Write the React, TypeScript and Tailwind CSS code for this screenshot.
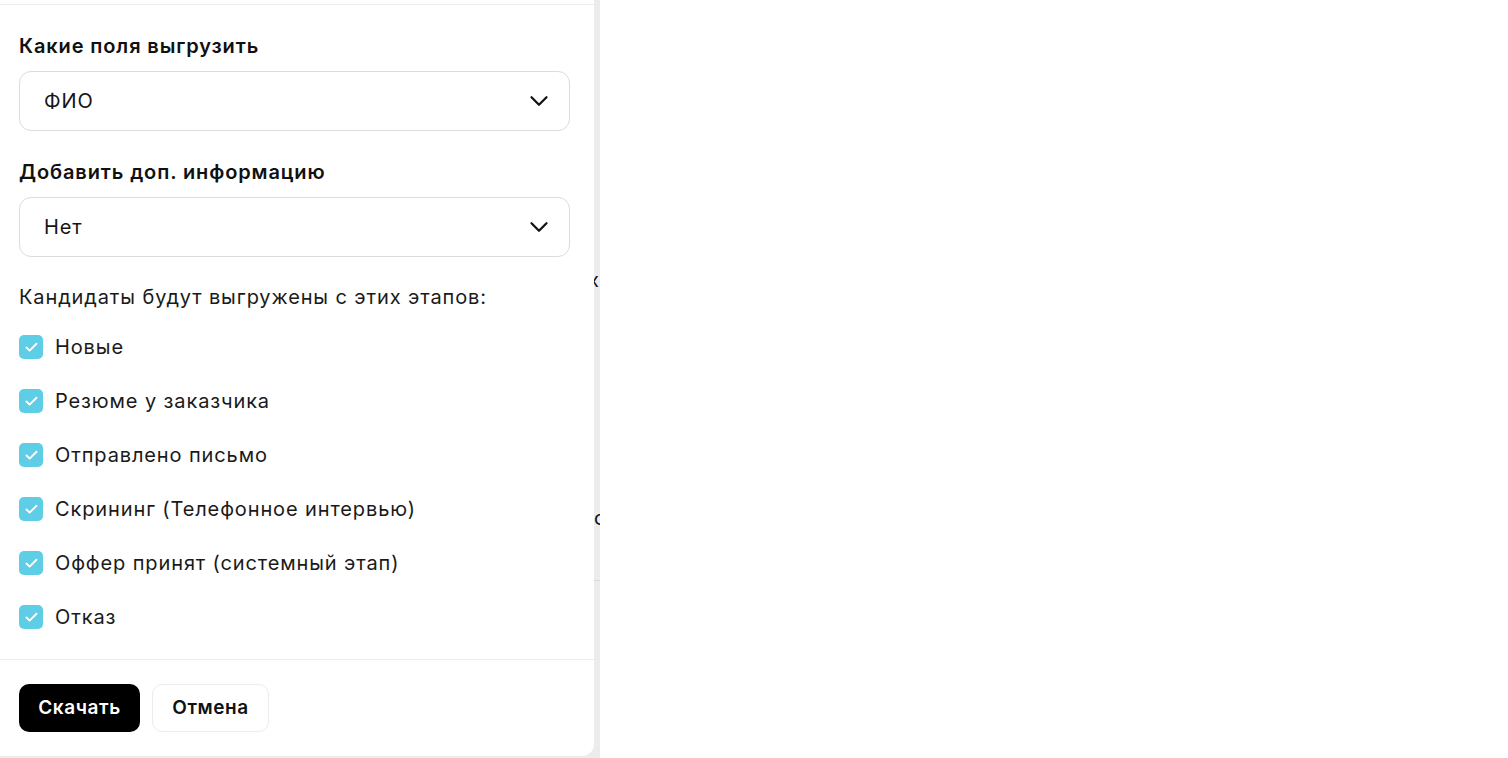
import { ChevronDown, Check } from 'lucide-react'

const stages = [
  'Новые',
  'Резюме у заказчика',
  'Отправлено письмо',
  'Скрининг (Телефонное интервью)',
  'Оффер принят (системный этап)',
  'Отказ',
]

function Select({ value }: { value: string }) {
  return (
    <div className="mt-[11px] flex h-[60px] items-center justify-between rounded-xl border border-[#dcdcdc] bg-white pl-[24px] pr-[15px]">
      <span className="text-[20px] tracking-[0.044em] text-[#141414]">{value}</span>
      <ChevronDown className="h-[30px] w-[30px] text-[#111]" strokeWidth={1.8} />
    </div>
  )
}

export default function App() {
  return (
    <div
      className="flex h-[758px] w-full bg-white"
      style={{ fontFamily: 'Inter, "Noto Sans", sans-serif' }}
    >
      <div className="flex w-[600px] bg-[#ececec]">
        <div className="mb-[2px] flex w-[594px] flex-col rounded-br-xl bg-white">
          <div className="h-[4px]" />
          <div className="border-t border-[#ececec] px-[19px] pr-[24px] pt-[27px]">
            <h2 className="text-[20px] font-semibold leading-7 tracking-[0.044em] text-[#111]">
              Какие поля выгрузить
            </h2>
            <Select value="ФИО" />
            <h2 className="mt-[27px] text-[20px] font-semibold leading-7 tracking-[0.044em] text-[#111]">
              Добавить доп. информацию
            </h2>
            <Select value="Нет" />
            <p className="mt-[26px] text-[20px] leading-7 tracking-[0.044em] text-[#1a1a1a]">
              Кандидаты будут выгружены с этих этапов:
            </p>
            <div className="mt-[24px] flex flex-col gap-[30px]">
              {stages.map((s) => (
                <label key={s} className="flex h-[24px] items-center gap-[12px]">
                  <span className="flex h-[24px] w-[24px] items-center justify-center rounded-[5px] bg-[#5ecde6]">
                    <Check className="h-[15px] w-[15px] text-white" strokeWidth={3} />
                  </span>
                  <span className="text-[20px] tracking-[0.044em] text-[#1a1a1a]">{s}</span>
                </label>
              ))}
            </div>
          </div>
          <div className="mt-[30px] flex gap-[12px] border-t border-[#ececec] px-[19px] pt-[24px]">
            <button className="h-[48px] w-[121px] rounded-[10px] bg-black text-[19px] font-semibold tracking-[0.03em] text-white">
              Скачать
            </button>
            <button className="h-[48px] w-[117px] rounded-[10px] border border-[#ececec] bg-white text-[19px] font-semibold tracking-[0.03em] text-[#111]">
              Отмена
            </button>
          </div>
        </div>
        <div className="relative flex-1 overflow-hidden">
          <span className="absolute left-[-6px] top-[266px] text-[20px] leading-7 text-[#111]">x</span>
          <span className="absolute left-[0px] top-[504px] text-[20px] leading-7 text-[#111]">c</span>
          <div className="absolute left-0 right-0 top-[580px] h-px bg-[#dadada]" />
        </div>
      </div>
      <div className="flex-1" />
    </div>
  )
}
